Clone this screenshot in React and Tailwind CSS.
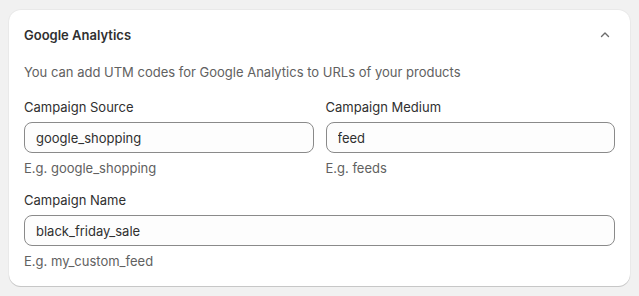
import React, { useState } from 'react';

function Field({ label, value, hint }) {
  return (
    <div className="flex flex-col">
      <label className="text-[13px] leading-5 text-[#303030]">{label}</label>
      <input
        type="text"
        defaultValue={value}
        className="mt-[5px] h-[31px] px-[11px] border border-[#8a8a8a] bg-[#fdfdfd] rounded-[8px] text-[13px] text-[#303030] outline-none"
      />
      <p className="mt-[5px] text-[13px] leading-5 text-[#616161]">{hint}</p>
    </div>
  );
}

export default function App() {
  const [open] = useState(true);

  return (
    <div className="w-[639px] h-[296px] bg-[#f1f1f1] pt-[10px] px-[9px] font-['Inter',sans-serif]">
      <div className="bg-white rounded-[12px] shadow-[0_1px_0_0_rgba(26,26,26,0.07),0_1px_0_0_#d4d4d4,0_0_0_1px_rgba(0,0,0,0.03)] px-[15px] pt-[15px] pb-[15px]">
        <div className="flex items-center justify-between h-5">
          <h2 className="text-[13px] font-semibold leading-5 text-[#303030]">Google Analytics</h2>
          <svg width="16" height="16" viewBox="0 0 16 16" className="mr-[2px]" fill="none">
            <path d="M4.5 9.5 8 6l3.5 3.5" stroke="#6b6b6b" strokeWidth="1.4" strokeLinecap="round" strokeLinejoin="round" />
          </svg>
        </div>

        {open && (
          <div className="mt-[17px]">
            <p className="text-[13px] leading-5 text-[#616161]">
              You can add UTM codes for Google Analytics to URLs of your products
            </p>
            <div className="mt-[15px] grid grid-cols-2 gap-x-[12px]">
              <Field label="Campaign Source" value="google_shopping" hint="E.g. google_shopping" />
              <Field label="Campaign Medium" value="feed" hint="E.g. feeds" />
            </div>
            <div className="mt-[12px]">
              <Field label="Campaign Name" value="black_friday_sale" hint="E.g. my_custom_feed" />
            </div>
          </div>
        )}
      </div>
    </div>
  );
}
